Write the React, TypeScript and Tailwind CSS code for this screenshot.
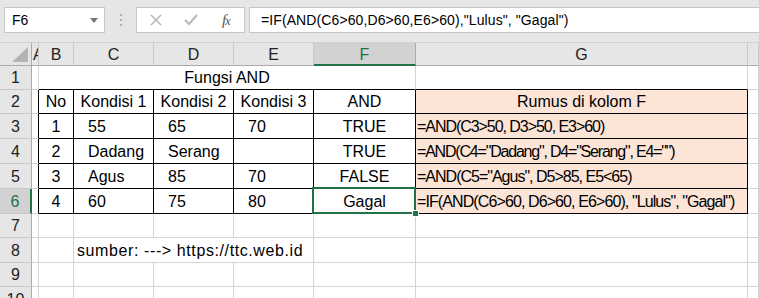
import React from 'react';

const FONT = "font-['Liberation_Sans',Arial,sans-serif]";

const COL_LABELS = ['A', 'B', 'C', 'D', 'E', 'F', 'G', ''];

type CellDef = { text?: string; align?: 'center' | 'left' | 'indent' | 'pad'; fill?: boolean; tight?: string };

const rows: Record<number, CellDef[]> = {
  2: [
    {},
    { text: 'No', align: 'center' },
    { text: 'Kondisi 1', align: 'center' },
    { text: 'Kondisi 2', align: 'center' },
    { text: 'Kondisi 3', align: 'center' },
    { text: 'AND', align: 'center' },
    { text: 'Rumus di kolom F', align: 'center', fill: true },
  ],
  3: [
    {},
    { text: '1', align: 'center' },
    { text: '55', align: 'indent' },
    { text: '65', align: 'indent' },
    { text: '70', align: 'indent' },
    { text: 'TRUE', align: 'center' },
    { text: '=AND(C3>50, D3>50, E3>60)', align: 'left', fill: true, tight: 'tracking-[-1.05px]' },
  ],
  4: [
    {},
    { text: '2', align: 'center' },
    { text: 'Dadang', align: 'indent' },
    { text: 'Serang', align: 'indent' },
    { text: '', align: 'indent' },
    { text: 'TRUE', align: 'center' },
    { text: '=AND(C4="Dadang", D4="Serang", E4="")', align: 'left', fill: true, tight: 'tracking-[-1.2px]' },
  ],
  5: [
    {},
    { text: '3', align: 'center' },
    { text: 'Agus', align: 'indent' },
    { text: '85', align: 'indent' },
    { text: '70', align: 'indent' },
    { text: 'FALSE', align: 'center' },
    { text: '=AND(C5="Agus", D5>85, E5<65)', align: 'left', fill: true, tight: 'tracking-[-1px]' },
  ],
  6: [
    {},
    { text: '4', align: 'center' },
    { text: '60', align: 'indent' },
    { text: '75', align: 'indent' },
    { text: '80', align: 'indent' },
    { text: 'Gagal', align: 'center' },
    { text: '=IF(AND(C6>60, D6>60, E6>60), "Lulus", "Gagal")', align: 'left', fill: true, tight: 'tracking-[-0.9px]' },
  ],
};

const inTable = (r: number) => r >= 2 && r <= 6;

function rightBorder(r: number, c: number) {
  if (inTable(r) && c <= 6) return 'border-r-black';
  return 'border-r-[#d4d4d4]';
}

function bottomBorder(r: number, c: number) {
  if ((r === 1 || inTable(r)) && c >= 1 && c <= 6) return 'border-b-black';
  return 'border-b-[#d4d4d4]';
}

function alignCls(a?: CellDef['align']) {
  if (a === 'center') return 'justify-center';
  if (a === 'indent') return 'justify-start pl-[14px]';
  if (a === 'pad') return 'justify-start pl-[3px]';
  return 'justify-start pl-[1px]';
}

const Cell: React.FC<{ r: number; c: number; def?: CellDef }> = ({ r, c, def }) => {
  const selected = r === 6 && c === 5;
  return (
    <div
      className={`flex items-end pb-[1px] leading-[20px] whitespace-nowrap border-r border-b ${rightBorder(r, c)} ${bottomBorder(r, c)} ${
        def?.fill ? 'bg-[#fce4d6]' : 'bg-white'
      } ${alignCls(def?.align)} ${def?.tight ?? ''} ${selected ? 'relative' : ''}`}
    >
      {def?.text}
      {selected && (
        <>
          <div className="absolute -left-[2px] -top-[2px] -right-[1px] -bottom-[1px] border-2 border-[#217346]" />
          <div className="absolute -right-[4px] -bottom-[4px] w-[7px] h-[7px] bg-[#217346] border border-white" />
        </>
      )}
    </div>
  );
};

const RowHeader: React.FC<{ n: number; active?: boolean }> = ({ n, active }) => (
  <div
    className={`flex items-end justify-center pb-[1px] leading-[20px] border-b border-b-[#c8c8c8] ${
      active ? 'bg-[#d2d2d2] text-[#217346] border-r-2 border-r-[#217346]' : 'bg-[#e6e6e6] text-[#222] border-r border-r-[#ababab]'
    }`}
  >
    {n}
  </div>
);

export default function App() {
  const rowNums = [1, 2, 3, 4, 5, 6, 7, 8, 9, 10];
  return (
    <div className={`w-[759px] h-[298px] overflow-hidden bg-white text-[16px] text-black ${FONT}`}>
      {/* formula bar */}
      <div className="h-[43px] bg-[#e6e6e6] flex items-start pt-[7px] pl-[4px] text-[14px] border-b border-b-[#d0d0d0]">
        <div className="w-[101px] h-[26px] bg-white border border-[#c6c6c6] flex items-center justify-between pl-[7px] pr-[6px]">
          <span>F6</span>
          <svg width="8" height="5" viewBox="0 0 8 5">
            <path d="M0 0 L8 0 L4 5 Z" fill="#777" />
          </svg>
        </div>
        <div className="w-[31px] h-[26px] flex flex-col items-center justify-center gap-[3px]">
          <div className="w-[2px] h-[2px] bg-[#b0b0b0]" />
          <div className="w-[2px] h-[2px] bg-[#b0b0b0]" />
          <div className="w-[2px] h-[2px] bg-[#b0b0b0]" />
        </div>
        <div className="w-[109px] h-[26px] bg-white border border-[#c6c6c6] flex items-center">
          <svg className="ml-[13px]" width="12" height="12" viewBox="0 0 12 12">
            <path d="M1 1 L11 11 M11 1 L1 11" stroke="#b9b9b9" strokeWidth="1.6" />
          </svg>
          <svg className="ml-[22px]" width="14" height="12" viewBox="0 0 14 12">
            <path d="M1 6 L5 10 L13 1" stroke="#b9b9b9" strokeWidth="2" fill="none" />
          </svg>
          <span className="ml-[24px] italic font-['Liberation_Serif',serif] text-[15px] text-[#555] tracking-[-1px]">
            f<span className="text-[12px]">x</span>
          </span>
        </div>
        <div className="ml-[4px] flex-1 h-[26px] bg-white border border-[#c6c6c6] border-r-0 flex items-center pl-[11px] whitespace-nowrap tracking-[0.1px]">
          =IF(AND(C6&gt;60,D6&gt;60,E6&gt;60),"Lulus", "Gagal")
        </div>
      </div>

      {/* sheet grid */}
      <div className="grid grid-cols-[32px_7px_35px_80px_80px_80px_102px_332px_1fr] grid-rows-[23px_24px_24px_25px_25px_25px_25px_24px_25px_24px_25px]">
        {/* corner */}
        <div className="bg-[#e6e6e6] border-r border-b border-[#ababab] flex items-end justify-end pr-[3px] pb-[3px]">
          <svg width="16" height="15" viewBox="0 0 16 15">
            <path d="M16 0 L16 15 L0 15 Z" fill="#b4b4b4" />
          </svg>
        </div>
        {COL_LABELS.map((l, i) => (
          <div
            key={i}
            className={`flex items-center pt-[2px] leading-[20px] overflow-hidden ${i === 0 ? 'justify-start pl-[1px]' : 'justify-center'} ${
              l === 'F'
                ? 'bg-[#d2d2d2] text-[#217346] border-r border-r-[#ababab] border-b-2 border-b-[#217346]'
                : 'bg-[#e6e6e6] text-[#222] border-r border-r-[#c8c8c8] border-b border-b-[#ababab]'
            }`}
          >
            {l}
          </div>
        ))}

        {rowNums.map(r => {
          if (r === 1) {
            return (
              <React.Fragment key={r}>
                <RowHeader n={r} />
                <Cell r={1} c={0} />
                <div className="col-span-5 flex items-end justify-center pb-[1px] leading-[20px] border-r border-b border-r-[#d4d4d4] border-b-black bg-white">
                  Fungsi AND
                </div>
                <Cell r={1} c={6} />
                <Cell r={1} c={7} />
              </React.Fragment>
            );
          }
          if (r === 8) {
            return (
              <React.Fragment key={r}>
                <RowHeader n={r} />
                <Cell r={8} c={0} />
                <Cell r={8} c={1} />
                <div className="col-span-3 flex items-end pb-[1px] pl-[3px] leading-[20px] whitespace-nowrap tracking-[0.6px] border-r border-b border-[#d4d4d4] bg-white">
                  sumber: ---&gt; https://ttc.web.id
                </div>
                <Cell r={8} c={5} />
                <Cell r={8} c={6} />
                <Cell r={8} c={7} />
              </React.Fragment>
            );
          }
          const defs = rows[r] || [];
          return (
            <React.Fragment key={r}>
              <RowHeader n={r} active={r === 6} />
              {[0, 1, 2, 3, 4, 5, 6, 7].map(c => (
                <Cell key={c} r={r} c={c} def={defs[c]} />
              ))}
            </React.Fragment>
          );
        })}
      </div>
    </div>
  );
}
